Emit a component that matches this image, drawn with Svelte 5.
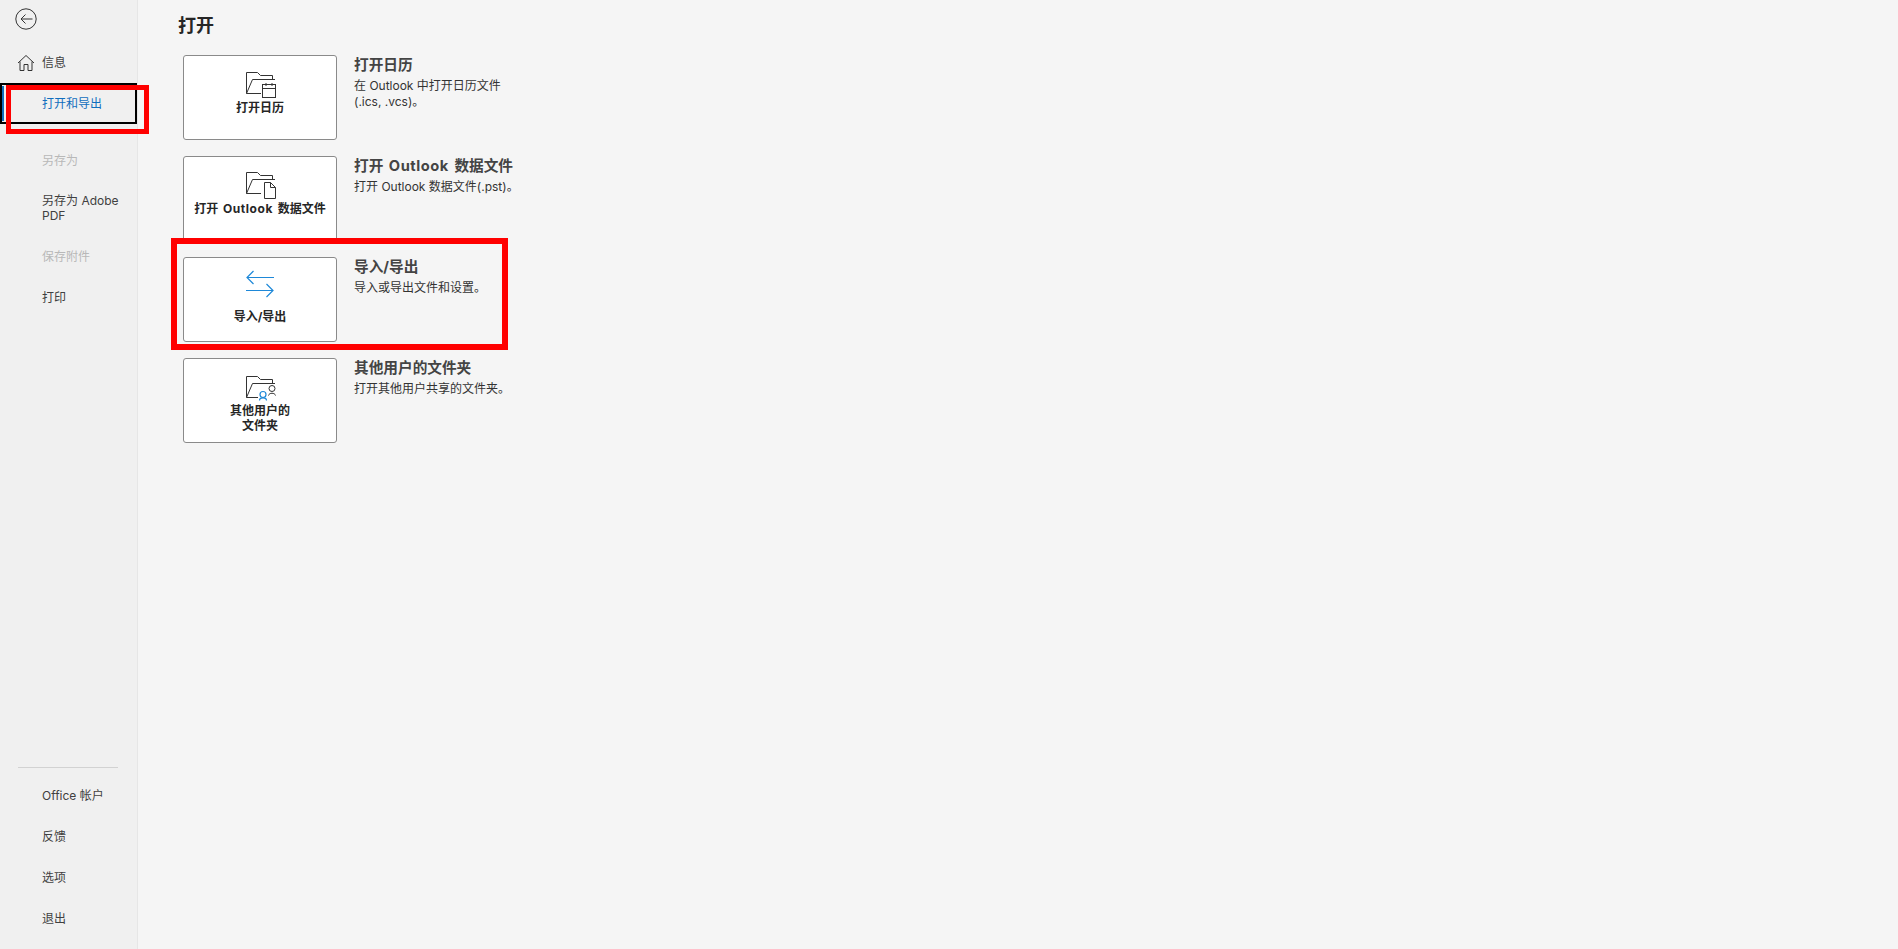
<script>
	const rows = [
		{
			icon: 'calendar',
			label: ['打开日历'],
			title: '打开日历',
			desc: '在 Outlook 中打开日历文件 (.ics, .vcs)。'
		},
		{
			icon: 'file',
			label: ['打开 Outlook 数据文件'],
			title: '打开 Outlook 数据文件',
			desc: '打开 Outlook 数据文件(.pst)。'
		},
		{
			icon: 'arrows',
			label: ['导入/导出'],
			title: '导入/导出',
			desc: '导入或导出文件和设置。',
			marked: true
		},
		{
			icon: 'users',
			label: ['其他用户的', '文件夹'],
			title: '其他用户的文件夹',
			desc: '打开其他用户共享的文件夹。'
		}
	];
</script>

{#snippet folder(dy)}
	<g transform="translate(0 {dy})" class="line">
		<path d="M2.5 25.5V4.5H13.5L16.5 7.5H28.5V11.5" />
		<path d="M2.5 25.5L8.5 11.5H31" />
		<path d="M2.5 25.5H17" />
	</g>
{/snippet}

{#snippet spaced(text)}
	{#each text.split(/(Outlook)/) as part}
		{#if part === 'Outlook'}<span class="latin">{part}</span>{:else}{part}{/if}
	{/each}
{/snippet}

<div class="page">
	<nav class="side">
		<button class="back" aria-label="返回">
			<svg width="24" height="24" viewBox="0 0 24 24">
				<circle class="line" cx="12" cy="12" r="10.2" />
				<path class="line" d="M18.5 12H7M11.5 7.5L7 12L11.5 16.5" />
			</svg>
		</button>

		<div class="item home">
			<svg width="18" height="18" viewBox="0 0 18 18">
				<path class="line" d="M1 9L9 1.5L17 9M3 7.5V16.5H7V10.5H11V16.5H15V7.5" />
			</svg>
			信息
		</div>
		<div class="item selected">
			<span class="bar"></span>
			打开和导出
			<span class="mark mark-nav"></span>
		</div>
		<div class="item off group">另存为</div>
		<div class="item tall">另存为 Adobe<br />PDF</div>
		<div class="item off">保存附件</div>
		<div class="item">打印</div>

		<div class="bottom">
			<div class="rule"></div>
			<div class="item">Office 帐户</div>
			<div class="item">反馈</div>
			<div class="item">选项</div>
			<div class="item">退出</div>
		</div>
	</nav>

	<main class="main">
		<h1>打开</h1>
		<div class="list">
			{#each rows as row}
				<div class="row">
					<div class="card">
						{#if row.icon === 'calendar'}
							<svg width="32" height="32" viewBox="0 0 32 32">
								{@render folder(0)}
								<rect class="line paper" x="18.5" y="16.5" width="13" height="13" />
								<path class="line" d="M18.5 20.5H31.5M22 15V18M28 15V18" />
							</svg>
						{:else if row.icon === 'file'}
							<svg width="32" height="32" viewBox="0 0 32 32">
								{@render folder(-1)}
								<path class="line paper" d="M20.5 13.5H26.5L31.5 18.5V29.5H20.5Z" />
								<path class="line" d="M26.5 13.5V18.5H31.5" />
							</svg>
						{:else if row.icon === 'arrows'}
							<svg width="32" height="39" viewBox="0 0 32 39">
								<path class="blue" d="M30 7.5H3M9.500 1L3 7.5L9.500 14" />
								<path class="blue" d="M2 20.5H29M22.500 14L29 20.5L22.500 27" />
							</svg>
						{:else}
							<svg width="32" height="32" viewBox="0 0 32 32">
								{@render folder(1)}
								<rect class="paper" x="14" y="13" width="18" height="18" />
								<circle class="line" cx="28" cy="17.5" r="3" />
								<path class="line" d="M24.5 24.5C25 21.5 31 21.5 31.5 24.5" />
								<circle class="blue" cx="19" cy="23.5" r="3" />
								<path class="blue" d="M15.5 29.5C15.5 26 22.500 26 22.500 29.500" />
							</svg>
						{/if}
						<div class="label">
							{#each row.label as line}
								<div>{@render spaced(line)}</div>
							{/each}
						</div>
					</div>
					<div class="text">
						<h2>{@render spaced(row.title)}</h2>
						<p>{row.desc}</p>
					</div>
					{#if row.marked}
						<span class="mark mark-row"></span>
					{/if}
				</div>
			{/each}
		</div>
	</main>
</div>

<style>
	:global(body) {
		margin: 0;
		background: #f5f5f5;
	}

	.page {
		display: flex;
		height: 949px;
		overflow: hidden;
		font-family: Inter, 'Noto Sans CJK SC', sans-serif;
		font-size: 12px;
		color: #404040;
	}

	.side {
		box-sizing: border-box;
		width: 138px;
		flex: none;
		display: flex;
		flex-direction: column;
		background: #f0f0f0;
		border-right: 1px solid #e6e6e6;
		padding: 7px 0 10px;
	}

	.back {
		display: block;
		width: 24px;
		height: 24px;
		margin: 0 0 11px 14px;
		padding: 0;
		background: none;
		border: 0;
	}

	.back svg {
		display: block;
	}

	.line {
		fill: none;
		stroke: #333;
		stroke-width: 1;
	}

	.paper {
		fill: #fff;
	}

	.blue {
		fill: none;
		stroke: #1e88d8;
		stroke-width: 1.2;
	}

	.item {
		position: relative;
		box-sizing: border-box;
		height: 41px;
		display: flex;
		align-items: center;
		padding-left: 42px;
		line-height: 15px;
		color: #404040;
	}

	.item.home svg {
		position: absolute;
		left: 17px;
		top: 12px;
	}

	.item.tall {
		display: block;
		height: 55px;
		padding-top: 12px;
	}

	.item.group {
		margin-top: 16px;
	}

	.item.off {
		color: #b8b8b8;
	}

	.item.selected {
		width: 137px;
		border: 2px solid #000;
		padding-left: 40px;
		color: #106ebe;
	}

	.bar {
		position: absolute;
		left: 0;
		top: 1px;
		bottom: 1px;
		width: 2px;
		background: #106ebe;
	}

	.mark {
		position: absolute;
		box-sizing: border-box;
		border: 5px solid #f00;
		pointer-events: none;
	}

	.mark-nav {
		left: 4px;
		top: 0;
		width: 143px;
		height: 49px;
	}

	.bottom {
		margin-top: auto;
	}

	.rule {
		width: 100px;
		height: 1px;
		margin: 0 0 7px 18px;
		background: #d2d2d2;
	}

	.main {
		flex: 1;
		padding: 14px 0 0 40px;
	}

	h1 {
		margin: 0 0 17px;
		font-size: 18px;
		line-height: 24px;
		font-weight: 700;
		color: #262626;
	}

	.list {
		display: flex;
		flex-direction: column;
		gap: 16px;
		padding-left: 5px;
	}

	.row {
		position: relative;
		display: flex;
		gap: 17px;
	}

	.card {
		box-sizing: border-box;
		width: 154px;
		height: 85px;
		flex: none;
		display: flex;
		flex-direction: column;
		align-items: center;
		padding-top: 12px;
		background: #fff;
		border: 1px solid #8a8a8a;
		border-radius: 3px;
	}

	.card svg {
		display: block;
		flex: none;
	}

	.label {
		font-weight: 700;
		line-height: 15px;
		color: #262626;
		text-align: center;
		word-spacing: 2px;
	}

	.latin {
		letter-spacing: 0.55px;
	}

	.text {
		width: 172px;
	}

	h2 {
		margin: 0 0 3px;
		font-size: 14.67px;
		line-height: 20px;
		font-weight: 700;
		color: #444;
		word-spacing: 2px;
	}

	p {
		margin: 0;
		line-height: 16px;
		color: #333;
	}

	.mark-row {
		left: -12px;
		top: -19px;
		width: 337px;
		height: 112px;
		border-width: 6px;
	}
</style>
